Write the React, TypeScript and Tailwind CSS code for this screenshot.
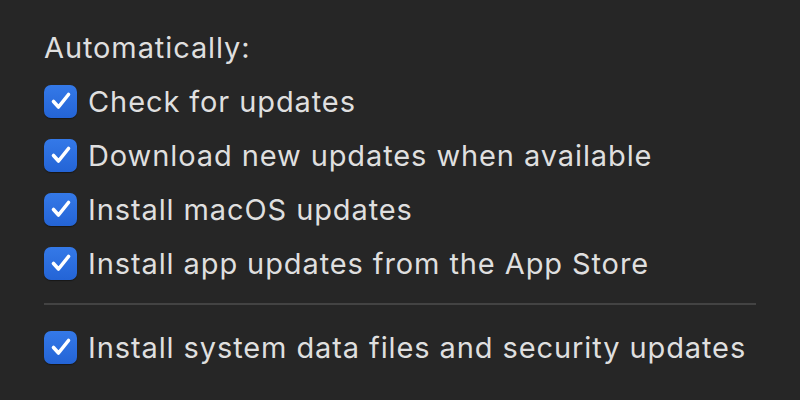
import React from 'react';

const items = [
  'Check for updates',
  'Download new updates when available',
  'Install macOS updates',
  'Install app updates from the App Store',
];

function CheckBox() {
  return (
    <div className="w-[33px] h-[33px] rounded-[7px] bg-gradient-to-b from-[#3479e8] to-[#2464d6] shadow-[0_1px_1px_rgba(0,0,0,0.4)] flex items-center justify-center shrink-0">
      <svg viewBox="0 0 32 32" className="w-[32px] h-[32px]">
        <path d="M8.5 16.5 L13.5 22 L23.5 9.5" fill="none" stroke="white" strokeWidth="3.6" strokeLinecap="round" strokeLinejoin="round" />
      </svg>
    </div>
  );
}

function Row({ label }: { label: string }) {
  return (
    <div className="h-[54px] flex items-center gap-[11px]">
      <CheckBox />
      <span className="text-[29px] tracking-[0.9px] text-[#dfdfdf] leading-none">{label}</span>
    </div>
  );
}

export default function App() {
  return (
    <div className="w-[800px] h-[400px] bg-[#262626] pt-[20px] pl-[44px] pr-[44px] font-['Inter','Noto_Sans',sans-serif]">
      <div className="h-[54px] flex items-center text-[29px] tracking-[0.9px] text-[#dfdfdf] leading-none">Automatically:</div>
      {items.map((label) => (
        <Row key={label} label={label} />
      ))}
      <div className="mt-[13px] h-[2px] bg-[#434343]" />
      <div className="mt-[15px]">
        <Row label="Install system data files and security updates" />
      </div>
    </div>
  );
}
